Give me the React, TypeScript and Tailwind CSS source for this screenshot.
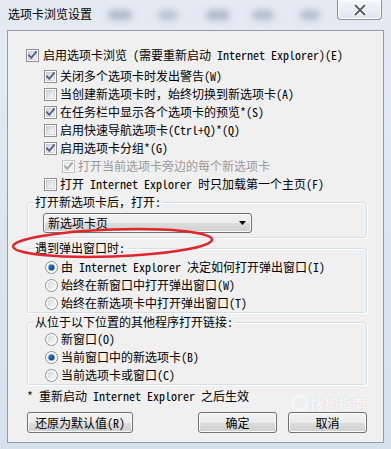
import React, { useId } from "react";

function Check({ checked, disabled }: { checked?: boolean; disabled?: boolean }) {
  const id = useId().replace(/:/g, "");
  return (
    <svg width="13" height="13" viewBox="0 0 13 13" className="shrink-0">
      <defs>
        <linearGradient id={`g${id}`} x1="0" y1="0" x2="1" y2="1">
          <stop offset="0" stopColor={disabled ? "#e6e6e6" : "#cfd3d9"} />
          <stop offset="1" stopColor="#fbfbfb" />
        </linearGradient>
      </defs>
      <rect x="0.5" y="0.5" width="12" height="12" fill="#fff" stroke={disabled ? "#c2c2c2" : "#8e8f8f"} />
      <rect x="2.5" y="2.5" width="8" height="8" fill={`url(#g${id})`} stroke={disabled ? "#dedede" : "#b9bdc4"} strokeWidth="0.6" />
      {checked && (
        <path
          d="M3 6.3 L5.3 8.8 L10 3.2"
          fill="none"
          stroke={disabled ? "#a6a6a6" : "#4a5f93"}
          strokeWidth="1.9"
          strokeLinecap="square"
        />
      )}
    </svg>
  );
}

function Radio({ checked }: { checked?: boolean }) {
  const id = useId().replace(/:/g, "");
  return (
    <svg width="13" height="13" viewBox="0 0 13 13" className="shrink-0">
      <defs>
        <linearGradient id={`r${id}`} x1="0" y1="0" x2="1" y2="1">
          <stop offset="0" stopColor="#d3d6da" />
          <stop offset="1" stopColor="#fafafa" />
        </linearGradient>
        <radialGradient id={`d${id}`} cx="0.4" cy="0.4" r="0.6">
          <stop offset="0" stopColor="#3a7fcc" />
          <stop offset="0.6" stopColor="#1b5499" />
          <stop offset="1" stopColor="#0f3d78" />
        </radialGradient>
      </defs>
      <circle cx="6.5" cy="6.5" r="6" fill="#fff" stroke="#8e8f8f" />
      <circle cx="6.5" cy="6.5" r="4.2" fill={`url(#r${id})`} />
      {checked && (
        <>
          <circle cx="6.5" cy="6.5" r="3.6" fill="#8fb8e0" />
          <circle cx="6.5" cy="6.5" r="2.7" fill={`url(#d${id})`} />
        </>
      )}
    </svg>
  );
}

function CheckRow({
  label,
  checked,
  disabled,
  indent,
}: {
  label: string;
  checked?: boolean;
  disabled?: boolean;
  indent: string;
}) {
  return (
    <div className={`flex h-[18px] items-center gap-[3px] ${indent}`}>
      <Check checked={checked} disabled={disabled} />
      <span className={`whitespace-nowrap leading-[18px] ${disabled ? "text-[#9a9a9a]" : "text-black"}`}>{label}</span>
    </div>
  );
}

function RadioRow({ label, checked }: { label: string; checked?: boolean }) {
  return (
    <div className="ml-[11px] flex h-[18px] items-center gap-[3px]">
      <Radio checked={checked} />
      <span className="whitespace-nowrap leading-[18px]">{label}</span>
    </div>
  );
}

function Button({ label, w }: { label: string; w: string }) {
  return (
    <div
      className={`${w} flex h-[21px] items-center justify-center rounded-[3px] border border-[#707070] bg-[linear-gradient(to_bottom,#f2f2f2_0%,#ebebeb_50%,#dddddd_50%,#cfcfcf_100%)] shadow-[inset_0_0_0_1px_#fbfbfb] leading-[18px]`}
    >
      {label}
    </div>
  );
}

export default function App() {
  return (
    <div className="relative flex h-[449px] w-[391px] flex-col overflow-hidden bg-[linear-gradient(to_bottom,#e3eaf2,#d7e1eb)] font-['Noto_Sans_Mono_CJK_SC','Noto_Sans_CJK_SC',monospace] text-[12px] text-black">
      {/* glass smudges */}
      <div className="pointer-events-none absolute left-[108px] top-[10px] h-[10px] w-[24px] rounded-full bg-[#7f8b98]/50 blur-[3px]" />
      <div className="pointer-events-none absolute left-[158px] top-[10px] h-[10px] w-[20px] rounded-full bg-[#7f8b98]/40 blur-[3px]" />
      <div className="pointer-events-none absolute left-[206px] top-[10px] h-[10px] w-[24px] rounded-full bg-[#7f8b98]/50 blur-[3px]" />
      <div className="pointer-events-none absolute left-[252px] top-[10px] h-[10px] w-[22px] rounded-full bg-[#7f8b98]/45 blur-[3px]" />
      <div className="pointer-events-none absolute left-[300px] top-[10px] h-[10px] w-[20px] rounded-full bg-[#7f8b98]/45 blur-[3px]" />

      {/* title bar */}
      <div className="relative flex h-[30px] shrink-0 items-start justify-between">
        <div className="pl-[8px] pt-[6px] font-['Noto_Sans_CJK_SC',sans-serif] text-[12px] leading-[16px] text-black">
          选项卡浏览设置
        </div>
        <div className="mr-[9px] flex h-[20px] w-[45px] items-center justify-center rounded-b-[4px] border border-t-0 border-[#8a929c] bg-[linear-gradient(to_bottom,#f4f7fa,#dfe6ee)] shadow-[inset_0_0_0_1px_#ffffff]">
          <svg width="14" height="12" viewBox="0 0 14 12">
            <path d="M2.5 1.5 L11.5 10.5 M11.5 1.5 L2.5 10.5" stroke="#ffffff" strokeWidth="4" strokeLinecap="round" />
            <path d="M2.5 1.5 L11.5 10.5 M11.5 1.5 L2.5 10.5" stroke="#59606a" strokeWidth="2" strokeLinecap="round" />
          </svg>
        </div>
      </div>

      {/* client area */}
      <div className="mx-[7px] flex h-[413px] shrink-0 flex-col border border-[#8d9db0] bg-[#f0f0f0] pl-[18px] pr-[16px] pt-[15px]">
        <CheckRow label="启用选项卡浏览 (需要重新启动 Internet Explorer)(E)" checked indent="gap-[4px]" />
        <div className="mt-[3px] flex flex-col">
          <CheckRow label="关闭多个选项卡时发出警告(W)" checked indent="pl-[18px]" />
          <CheckRow label="当创建新选项卡时，始终切换到新选项卡(A)" indent="pl-[18px]" />
          <CheckRow label="在任务栏中显示各个选项卡的预览*(S)" checked indent="pl-[18px]" />
          <CheckRow label="启用快速导航选项卡(Ctrl+Q)*(Q)" indent="pl-[18px]" />
          <CheckRow label="启用选项卡分组*(G)" checked indent="pl-[18px]" />
          <CheckRow label="打开当前选项卡旁边的每个新选项卡" checked disabled indent="pl-[36px]" />
          <CheckRow label="打开 Internet Explorer 时只加载第一个主页(F)" indent="pl-[18px]" />
        </div>

        <fieldset className="ml-[1px] mt-[1px] rounded-[3px] border border-[#d5dfe5] pb-[4px] pl-[6px] pr-[6px] shadow-[inset_1px_1px_0_#ffffff,1px_1px_0_#ffffff]">
          <legend className="px-[1px] leading-[16px]">打开新选项卡后，打开:</legend>
          <div className="ml-[9px] mt-[3px] flex h-[20px] w-[209px] items-center justify-between rounded-[3px] border border-[#707070] bg-[linear-gradient(to_bottom,#f2f2f2_0%,#ebebeb_50%,#dddddd_50%,#cfcfcf_100%)] pl-[4px] pr-[5px] shadow-[inset_0_0_0_1px_#fbfbfb]">
            <span className="leading-[18px]">新选项卡页</span>
            <svg width="7" height="4" viewBox="0 0 7 4">
              <path d="M0 0 L7 0 L3.5 4 Z" fill="#000" />
            </svg>
          </div>
        </fieldset>

        <fieldset className="ml-[1px] mt-[2px] rounded-[3px] border border-[#d5dfe5] pl-[6px] pr-[6px] pt-[2px] shadow-[inset_1px_1px_0_#ffffff,1px_1px_0_#ffffff]">
          <legend className="px-[1px] leading-[16px]">遇到弹出窗口时:</legend>
          <RadioRow label="由 Internet Explorer 决定如何打开弹出窗口(I)" checked />
          <RadioRow label="始终在新窗口中打开弹出窗口(W)" />
          <RadioRow label="始终在新选项卡中打开弹出窗口(T)" />
        </fieldset>

        <fieldset className="ml-[1px] mt-[1px] rounded-[3px] border border-[#d5dfe5] pl-[6px] pr-[6px] shadow-[inset_1px_1px_0_#ffffff,1px_1px_0_#ffffff]">
          <legend className="px-[1px] leading-[16px]">从位于以下位置的其他程序打开链接:</legend>
          <RadioRow label="新窗口(O)" />
          <RadioRow label="当前窗口中的新选项卡(B)" checked />
          <RadioRow label="当前选项卡或窗口(C)" />
        </fieldset>

        <div className="ml-[1px] mt-[2px] h-[18px] whitespace-nowrap leading-[18px]">* 重新启动 Internet Explorer 之后生效</div>

        <div className="ml-[1px] mt-[7px] flex items-center justify-between">
          <Button label="还原为默认值(R)" w="w-[106px]" />
          <div className="flex gap-[11px]">
            <Button label="确定" w="w-[79px]" />
            <Button label="取消" w="w-[79px]" />
          </div>
        </div>
      </div>

      {/* watermark */}
      <div className="pointer-events-none absolute left-[292px] top-[394px] flex items-center gap-[2px] font-['Noto_Sans_CJK_SC',sans-serif] text-[14px] font-bold leading-[18px] text-[#f7f7f7] [text-shadow:0_0_1px_#c8c8c8]">
        <span className="flex h-[16px] w-[16px] items-center justify-center rounded-full border-2 border-[#f7f7f7] text-[10px] leading-none">S</span>
        <span>搜狗指南</span>
      </div>

      {/* red annotation ellipse */}
      <svg className="pointer-events-none absolute left-0 top-0" width="391" height="449" viewBox="0 0 391 449">
        <ellipse
          cx="112.5"
          cy="243"
          rx="99.5"
          ry="13.5"
          transform="rotate(-2 112.5 243)"
          fill="none"
          stroke="#e0262b"
          strokeWidth="2.5"
        />
      </svg>
    </div>
  );
}
